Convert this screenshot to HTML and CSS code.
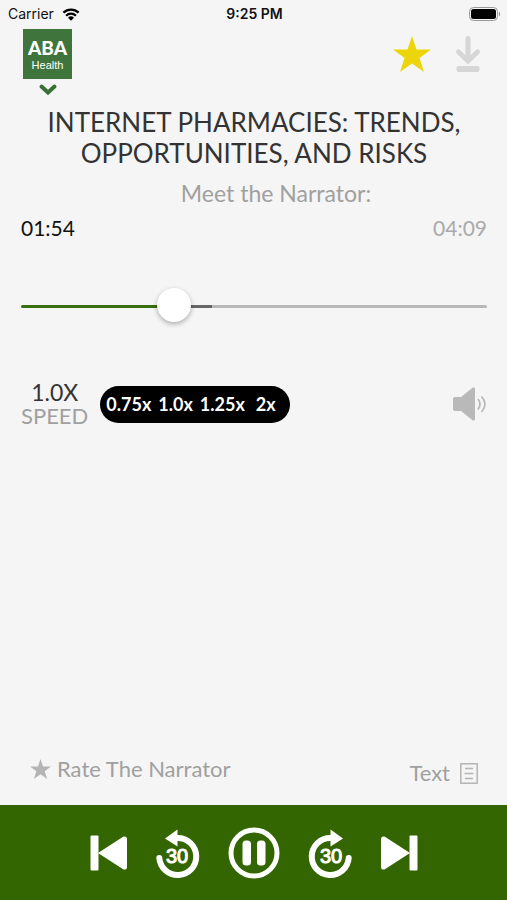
FILE: index.html
```
<!DOCTYPE html>
<html lang="en">
<head>
    <meta charset="UTF-8">
    <meta name="viewport" content="width=device-width, initial-scale=1">
    <title>ABA Health</title>
    <link rel="stylesheet" href="styles.css">
</head>
<body>
<div class="status">
    <div class="carrier">
        <span>Carrier</span>
        <svg width="18" height="13" viewBox="0 0 18 13">
            <path d="M1.4 4.7a11 11 0 0 1 15.2 0" fill="none" stroke="#000" stroke-width="2.4"/>
            <path d="M4.1 7.7a7 7 0 0 1 9.8 0" fill="none" stroke="#000" stroke-width="2.2"/>
            <path d="M9 12.8L6 9.7a4.3 4.3 0 0 1 6 0z"/>
        </svg>
    </div>
    <span class="clock">9:25 PM</span>
    <svg class="battery" width="32" height="14" viewBox="0 0 32 14">
        <rect x="0.5" y="0.5" width="28" height="13" rx="4" fill="none" stroke="#999"/>
        <rect x="2" y="2" width="25" height="10" rx="2.5"/>
        <path d="M30 4.5q2 2.5 0 5z" fill="#777"/>
    </svg>
</div>

<header class="top">
    <button class="brand" aria-label="ABA Health">
        <span class="logo"><b>ABA</b><span>Health</span></span>
        <svg width="18" height="12" viewBox="0 0 18 12">
            <path d="M2.5 2.5L9 8.5l6.5-6" fill="none" stroke="#3a6f38" stroke-width="4" stroke-linecap="round"/>
        </svg>
    </button>
    <div class="actions">
        <button aria-label="Favourite">
            <svg width="38" height="36" viewBox="0 0 38 36">
                <path d="M19 0l4.5 13.5H38L26.5 22 31 36l-12-8.6L7 36l4.5-14L0 13.5h14.5z" fill="#ecd60b"/>
            </svg>
        </button>
        <button aria-label="Download">
            <svg width="24" height="36" viewBox="0 0 24 36">
                <path d="M12 2.5v21M2.5 16l9.5 9 9.5-9" fill="none" stroke="#d6d6d6" stroke-width="5" stroke-linecap="round"/>
                <rect x="0.5" y="30" width="23" height="6" rx="2" fill="#d6d6d6"/>
            </svg>
        </button>
    </div>
</header>

<main>
    <h1>INTERNET PHARMACIES: TRENDS, OPPORTUNITIES, AND RISKS</h1>
    <p class="narrator">Meet the Narrator:</p>

    <div class="times">
        <span>01:54</span>
        <span class="total">04:09</span>
    </div>
    <input class="seek" type="range" min="0" max="1000" value="315" aria-label="Position">

    <div class="options">
        <div class="speed">
            <span class="value">1.0X</span>
            <span>SPEED</span>
        </div>
        <div class="rates">
            <button>0.75x</button>
            <button>1.0x</button>
            <button>1.25x</button>
            <button class="last">2x</button>
        </div>
        <button class="volume" aria-label="Volume">
            <svg width="34" height="34" viewBox="0 0 34 34">
                <path d="M2 10h6L19.5 0.8Q22 0 22 2v30q0 2-2.5 1.2L8 24H2q-2 0-2-2V12q0-2 2-2z" fill="#b9b9b9"/>
                <path d="M25 12q4 5 0 10.5M28.5 9.5q7 7.5 0 15.5" fill="none" stroke="#b9b9b9" stroke-width="1.8"/>
            </svg>
        </button>
    </div>

    <div class="links">
        <a href="#">
            <svg width="21" height="20" viewBox="0 0 38 36">
                <path d="M19 0l4.5 13.5H38L26.5 22 31 36l-12-8.6L7 36l4.5-14L0 13.5h14.5z" fill="#b4b4b4"/>
            </svg>
            Rate The Narrator
        </a>
        <a class="text" href="#">
            Text
            <svg width="18" height="21" viewBox="0 0 18 21" fill="none" stroke="#b4b4b4" stroke-width="1.5">
                <rect x="0.8" y="0.8" width="16.4" height="19.4"/>
                <path d="M5 5.5h8M4.5 10.5h9M5 15.5h8"/>
            </svg>
        </a>
    </div>
</main>

<footer class="player">
    <button aria-label="Previous">
        <svg width="37" height="36" viewBox="0 0 37 36" fill="#fff">
            <rect x="0.5" y="0.5" width="8" height="35" rx="1"/>
            <path d="M8 18L33.5 1.5Q37 1 37 4v28q0 3-3.5 2.5z"/>
        </svg>
    </button>
    <button aria-label="Back 30 seconds">
        <svg width="43" height="48" viewBox="0 0 43 48" fill="#fff">
            <path d="M21.5 9A18.5 18.5 0 1 1 3.3 29" fill="none" stroke="#fff" stroke-width="6" stroke-linecap="round"/>
            <path d="M9 9.5L21.5 0.5v17z"/>
            <text x="21" y="34" text-anchor="middle">30</text>
        </svg>
    </button>
    <button aria-label="Pause">
        <svg width="52" height="52" viewBox="0 0 52 52" fill="#fff">
            <circle cx="26" cy="26" r="23" fill="none" stroke="#fff" stroke-width="5"/>
            <rect x="14.5" y="13.5" width="8.5" height="25" rx="3.5"/>
            <rect x="29" y="13.5" width="8.5" height="25" rx="3.5"/>
        </svg>
    </button>
    <button aria-label="Forward 30 seconds">
        <svg width="43" height="48" viewBox="0 0 43 48" fill="#fff">
            <path d="M21.5 9A18.5 18.5 0 1 0 39.7 29" fill="none" stroke="#fff" stroke-width="6" stroke-linecap="round"/>
            <path d="M34 9.5L21.5 0.5v17z"/>
            <text x="22" y="34" text-anchor="middle">30</text>
        </svg>
    </button>
    <button aria-label="Next">
        <svg width="37" height="36" viewBox="0 0 37 36" fill="#fff">
            <rect x="28.5" y="0.5" width="8" height="35" rx="1"/>
            <path d="M29 18L3.5 1.5Q0 1 0 4v28q0 3 3.5 2.5z"/>
        </svg>
    </button>
</footer>
</body>
</html>
```
FILE: styles.css
```
* {
    box-sizing: border-box;
}

body {
    margin: 0;
    min-height: 100vh;
    display: flex;
    flex-direction: column;
    background-color: #f5f5f5;
    color: #333;
    font-family: Lato, sans-serif;
}

button {
    padding: 0;
    border: 0;
    background: none;
    color: inherit;
    font: inherit;
    cursor: pointer;
}

svg {
    display: block;
    overflow: visible;
}

/* status bar */
.status {
    display: grid;
    grid-template-columns: 1fr auto 1fr;
    align-items: center;
    height: 28px;
    padding: 0 6px 0 8px;
    color: #111;
    font: 14px/28px Inter, sans-serif;
}

.carrier {
    display: flex;
    align-items: center;
    gap: 8px;
}

.clock {
    font-weight: 600;
}

.battery {
    justify-self: end;
}

/* header */
.top {
    display: flex;
    justify-content: space-between;
    align-items: flex-start;
    padding: 1px 27px 0 23px;
}

.brand {
    display: flex;
    flex-direction: column;
    align-items: center;
    gap: 5px;
}

.logo {
    display: flex;
    flex-direction: column;
    align-items: center;
    width: 49px;
    height: 50px;
    padding-top: 8px;
    background-color: #3f753c;
    color: #fff;
    font: 11px/12px "Liberation Sans", sans-serif;
}

.logo b {
    font: 900 19px/22px Lato, sans-serif;
}

.actions {
    display: flex;
    gap: 25px;
    padding-top: 7px;
}

/* content */
main {
    flex: 1;
    display: flex;
    flex-direction: column;
    padding: 0 20px 0 21px;
}

h1 {
    margin: 11px 0 0;
    font-size: 26px;
    line-height: 31px;
    font-weight: 400;
    text-align: center;
}

.narrator {
    margin: 9px 0 0;
    padding-left: 44px;
    color: #a0a0a0;
    font-size: 23px;
    line-height: 30px;
    text-align: center;
}

.times {
    display: flex;
    justify-content: space-between;
    margin-top: 6px;
    color: #111;
    font-size: 21px;
    line-height: 28px;
}

.total {
    color: #aaa;
}

.seek {
    -webkit-appearance: none;
    appearance: none;
    width: 100%;
    height: 34px;
    margin: 47px 0 0;
    background: none;
}

.seek::-webkit-slider-runnable-track {
    height: 3px;
    border-radius: 2px;
    background: linear-gradient(to right, #38700f 33%, #666 33%, #666 41%, #b8b8b8 41%);
}

.seek::-webkit-slider-thumb {
    -webkit-appearance: none;
    width: 34px;
    height: 34px;
    margin-top: -17px;
    border-radius: 50%;
    background-color: #fff;
    box-shadow: 0 2px 5px rgba(0, 0, 0, .3);
}

.options {
    display: flex;
    align-items: center;
    margin-top: 57px;
}

.speed {
    display: flex;
    flex-direction: column;
    align-items: center;
    color: #a0a0a0;
    font-size: 22px;
    line-height: 24px;
}

.speed .value {
    color: #333;
    font-size: 23px;
}

.rates {
    display: flex;
    align-items: center;
    gap: 7px;
    height: 37px;
    margin-left: 12px;
    padding: 0 14px 0 6px;
    border-radius: 19px;
    background-color: #000;
    color: #fff;
    font-size: 18px;
    font-weight: 700;
}

.rates .last {
    padding-left: 4px;
}

.volume {
    margin-left: auto;
}

.links {
    display: flex;
    justify-content: space-between;
    align-items: flex-start;
    margin-top: auto;
    padding: 0 9px 16px;
    font-size: 22px;
    line-height: 32px;
}

.links a {
    display: flex;
    align-items: center;
    gap: 6px;
    color: #a0a0a0;
    text-decoration: none;
}

.links .text {
    gap: 10px;
    padding-top: 4px;
}

/* player controls */
.player {
    display: flex;
    justify-content: center;
    align-items: center;
    gap: 29px;
    height: 95px;
    background-color: #336600;
}

.player text {
    font: 20px "Liberation Sans", sans-serif;
    stroke: #fff;
    stroke-width: 1px;
}
```
